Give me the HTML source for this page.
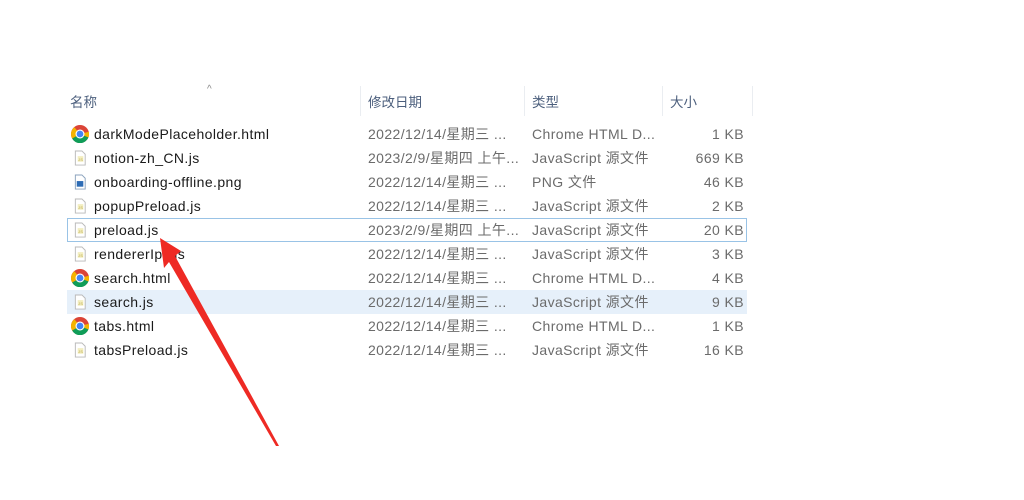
<!DOCTYPE html>
<html><head><meta charset="utf-8"><style>
body{margin:0;width:1024px;height:500px;background:#fff;font-family:"Liberation Sans","Noto Sans CJK SC",sans-serif;position:relative;overflow:hidden}
.h{position:absolute;top:91px;font-size:13.5px;color:#4c5f7d}
.vl{position:absolute;top:86px;height:30px;width:1px;background:#eaedf1}
.r{position:absolute;left:67px;width:680px;height:24px;font-size:14px;line-height:25px;letter-spacing:0.4px}
.r span{position:absolute;white-space:nowrap}
.n{left:27px;color:#1a1a1a}
.d{left:301px;color:#6b6b6b}
.t{left:465px;color:#6b6b6b}
.s{right:3px;color:#6b6b6b}
.ic{position:absolute;left:6px;top:4px;width:15px;height:16px}
</style></head><body>
<div style="position:absolute;left:207px;top:84px;font-size:10px;color:#888">^</div>
<div class="h" style="left:70px">名称</div>
<div class="h" style="left:368px">修改日期</div>
<div class="h" style="left:532px">类型</div>
<div class="h" style="left:670px">大小</div>
<div class="vl" style="left:360px"></div><div class="vl" style="left:524px"></div><div class="vl" style="left:662px"></div><div class="vl" style="left:752px"></div>

<div class="r" style="top:290px;background:#e6f0fa"></div>
<div class="r" style="top:218px;box-sizing:border-box;border:1px solid #99c3e6;height:24px"></div>

<svg width="0" height="0" style="position:absolute"><defs>
<g id="c"><circle cx="8" cy="8" r="8" fill="#db4437"/><path d="M8 8 L15.5 11 A8 8 0 0 1 1 12 Z" fill="#0f9d58"/><path d="M8 8 L1 12 A8 8 0 0 1 3 2 Z" fill="#f4b400"/><path d="M8 8 L15.5 11 A8 8 0 0 0 16 6 Z" fill="#f4b400"/><circle cx="8" cy="8" r="4" fill="#fff"/><circle cx="8" cy="8" r="3" fill="#4285f4"/></g>
<g id="j"><path d="M2.5 .5h7l3.5 3.5v11.5h-10.5z" fill="#fff" stroke="#b9b9b9"/><rect x="5" y="6" width="6" height="6" fill="#f3eec0"/><text x="5.5" y="11" font-size="4" fill="#b9a84a">JS</text></g>
<g id="p"><path d="M2.5 .5h7l3.5 3.5v11.5h-10.5z" fill="#fff" stroke="#8aa2bd"/><rect x="4" y="7" width="7" height="6" fill="#2d6cb5"/></g>
</defs></svg>

<div class="r" style="top:122px"><svg class="ic" viewBox="0 0 16 16" style="left:4px;top:3px;width:18px;height:18px"><use href="#c"/></svg><span class="n">darkModePlaceholder.html</span><span class="d">2022/12/14/星期三 ...</span><span class="t">Chrome HTML D...</span><span class="s">1 KB</span></div>
<div class="r" style="top:146px"><svg class="ic" viewBox="0 0 16 16"><use href="#j"/></svg><span class="n">notion-zh_CN.js</span><span class="d">2023/2/9/星期四 上午...</span><span class="t">JavaScript 源文件</span><span class="s">669 KB</span></div>
<div class="r" style="top:170px"><svg class="ic" viewBox="0 0 16 16"><use href="#p"/></svg><span class="n">onboarding-offline.png</span><span class="d">2022/12/14/星期三 ...</span><span class="t">PNG 文件</span><span class="s">46 KB</span></div>
<div class="r" style="top:194px"><svg class="ic" viewBox="0 0 16 16"><use href="#j"/></svg><span class="n">popupPreload.js</span><span class="d">2022/12/14/星期三 ...</span><span class="t">JavaScript 源文件</span><span class="s">2 KB</span></div>
<div class="r" style="top:218px"><svg class="ic" viewBox="0 0 16 16"><use href="#j"/></svg><span class="n">preload.js</span><span class="d">2023/2/9/星期四 上午...</span><span class="t">JavaScript 源文件</span><span class="s">20 KB</span></div>
<div class="r" style="top:242px"><svg class="ic" viewBox="0 0 16 16"><use href="#j"/></svg><span class="n">rendererIpc.js</span><span class="d">2022/12/14/星期三 ...</span><span class="t">JavaScript 源文件</span><span class="s">3 KB</span></div>
<div class="r" style="top:266px"><svg class="ic" viewBox="0 0 16 16" style="left:4px;top:3px;width:18px;height:18px"><use href="#c"/></svg><span class="n">search.html</span><span class="d">2022/12/14/星期三 ...</span><span class="t">Chrome HTML D...</span><span class="s">4 KB</span></div>
<div class="r" style="top:290px"><svg class="ic" viewBox="0 0 16 16"><use href="#j"/></svg><span class="n">search.js</span><span class="d">2022/12/14/星期三 ...</span><span class="t">JavaScript 源文件</span><span class="s">9 KB</span></div>
<div class="r" style="top:314px"><svg class="ic" viewBox="0 0 16 16" style="left:4px;top:3px;width:18px;height:18px"><use href="#c"/></svg><span class="n">tabs.html</span><span class="d">2022/12/14/星期三 ...</span><span class="t">Chrome HTML D...</span><span class="s">1 KB</span></div>
<div class="r" style="top:338px"><svg class="ic" viewBox="0 0 16 16"><use href="#j"/></svg><span class="n">tabsPreload.js</span><span class="d">2022/12/14/星期三 ...</span><span class="t">JavaScript 源文件</span><span class="s">16 KB</span></div>

<svg style="position:absolute;left:0;top:0" width="1024" height="500"><polygon points="160,238 181,251 175,256 279,446 276,446 169,262 164,268" fill="#ee2a24"/></svg>
</body></html>
